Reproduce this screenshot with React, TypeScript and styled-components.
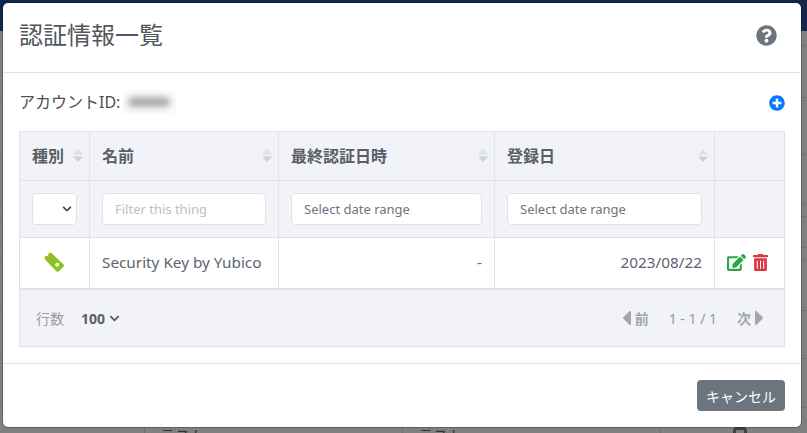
import * as React from 'react';
import styled, { createGlobalStyle } from 'styled-components';
import {
  FaQuestionCircle,
  FaPlusCircle,
  FaEdit,
  FaTrashAlt,
  FaCaretLeft,
  FaCaretRight,
  FaChevronDown,
} from 'react-icons/fa';

const GlobalStyle = createGlobalStyle`
  html, body {
    margin: 0;
    padding: 0;
    width: 807px;
    height: 433px;
    overflow: hidden;
    background: #808080;
    font-family: "Noto Sans", "Noto Sans CJK JP", sans-serif;
    color: #495057;
  }
  * { box-sizing: border-box; }
`;

const Page = styled.div`
  position: relative;
  width: 807px;
  height: 433px;
  display: flex;
  flex-direction: column;
  background: #808080;
  overflow: hidden;
`;

const NavBar = styled.div`
  height: 31px;
  flex: none;
  background: #14254d;
`;

const PageRow = styled.div<{ $height: number }>`
  height: ${({ $height }) => $height}px;
  flex: none;
  border-bottom: 1px solid #737373;
`;

const PageCells = styled.div`
  flex: 1;
  display: grid;
  grid-template-columns: 145px 258px 258px 1fr;
`;

const PageCell = styled.div`
  border-right: 1px solid #6f6f6f;
  padding: 17px 0 0 15px;
  font-size: 15px;
  line-height: 20px;
  color: #333;
  white-space: nowrap;

  &:last-child {
    border-right: none;
    padding-left: 72px;
  }
`;

const PageButton = styled.span`
  display: block;
  width: 14px;
  height: 14px;
  margin-top: 2px;
  border: 3px solid #3c4148;
  border-radius: 4px;
`;

const Dialog = styled.div`
  position: absolute;
  left: 3px;
  top: 3px;
  width: 798px;
  height: 424px;
  display: flex;
  flex-direction: column;
  background: #fff;
  border-radius: 5px;
  box-shadow: 0 0 0 1px rgba(0, 0, 0, 0.25);
`;

const DialogHeader = styled.header`
  height: 70px;
  flex: none;
  display: flex;
  align-items: center;
  justify-content: space-between;
  padding: 0 24px 5px 16px;
  border-bottom: 1px solid #dee2e6;
`;

const Title = styled.h1`
  margin: 0;
  font-size: 24px;
  font-weight: 400;
  line-height: 36px;
  color: #50565c;
`;

const HelpIcon = styled(FaQuestionCircle)`
  width: 21px;
  height: 21px;
  color: #6c757d;
`;

const DialogBody = styled.div`
  flex: 1;
  padding: 16px;
`;

const AccountRow = styled.div`
  height: 42px;
  display: flex;
  align-items: flex-start;
  justify-content: space-between;
`;

const AccountLabel = styled.div`
  display: flex;
  align-items: center;
  font-size: 16px;
  line-height: 26px;
  color: #495057;
`;

const BlurBox = styled.span`
  display: flex;
  align-items: center;
  justify-content: center;
  width: 54px;
  height: 24px;
  margin-left: 2px;
  overflow: hidden;
  background: #fbfbfb;
`;

const BlurredName = styled.span`
  display: block;
  width: 42px;
  height: 10px;
  border-radius: 5px;
  background: #a9a9ae;
  filter: blur(3px);
`;

const AddIcon = styled(FaPlusCircle)`
  width: 16px;
  height: 16px;
  margin-top: 6px;
  color: #007bff;
`;

const TableFrame = styled.table`
  width: 765px;
  table-layout: fixed;
  border-collapse: collapse;
  border: 1px solid #dee2ea;
`;

const HeadCell = styled.th`
  height: 49px;
  padding: 0 6px 2px 12px;
  background: #f1f3f8;
  border: 1px solid #dee2ea;
  text-align: left;
  font-size: 16px;
  font-weight: 700;
  color: #5a5f66;
`;

const HeadInner = styled.div`
  display: flex;
  align-items: center;
  justify-content: space-between;
`;

const FilterCell = styled.td`
  height: 57px;
  padding: 0 12px;
  background: #f1f3f8;
  border: 1px solid #dee2ea;
`;

const DataCell = styled.td<{ $align?: string }>`
  height: 51px;
  padding: 0 12px 2px;
  background: #fff;
  border: 1px solid #dee2ea;
  border-bottom: 2px solid #dee2ea;
  font-size: 15.3px;
  color: #5c6370;
  text-align: ${({ $align }) => $align || 'left'};
`;

const FilterInput = styled.input<{ $muted?: boolean }>`
  display: block;
  width: 100%;
  height: 32px;
  padding: 0 12px;
  border: 1px solid #dee2e6;
  border-radius: 4px;
  background: #fff;
  font-family: inherit;
  font-size: 13px;
  color: #495057;
  outline: none;

  &::placeholder {
    color: ${({ $muted }) => ($muted ? '#bcc0c6' : '#6c757d')};
    opacity: 1;
  }
`;

const SelectBox = styled.div`
  width: 45px;
  height: 32px;
  display: flex;
  align-items: center;
  justify-content: flex-end;
  padding-right: 4px;
  background: #fff;
  border: 1px solid #dee2e6;
  border-radius: 4px;
  color: #444;
`;

const ActionGroup = styled.div`
  display: flex;
  align-items: center;
  gap: 7px;
  margin-top: 2px;
`;

const EditIcon = styled(FaEdit)`
  width: 19px;
  height: 17px;
  color: #28a745;
`;

const TrashIcon = styled(FaTrashAlt)`
  width: 15px;
  height: 17px;
  color: #dc3545;
`;

const KeyCell = styled.div`
  display: flex;
  justify-content: center;
  margin-top: 2px;
`;

const Footer = styled.td`
  height: 58px;
  padding: 1px 16px 0;
  background: #f1f3f8;
  border: 1px solid #dee2ea;
`;

const FooterInner = styled.div`
  display: flex;
  align-items: center;
  justify-content: space-between;
`;

const RowsGroup = styled.div`
  display: flex;
  align-items: center;
  font-size: 14px;
  color: #999ca3;
`;

const RowsValue = styled.strong`
  display: flex;
  align-items: center;
  gap: 4px;
  margin-left: 17px;
  color: #5a5f66;
  font-size: 14px;
`;

const Pager = styled.div`
  display: flex;
  align-items: center;
  height: 24px;
  padding-right: 4px;
  font-size: 14px;
  color: #a3a6ad;
`;

const PagerStep = styled.span`
  display: flex;
  align-items: center;
  gap: 4px;
  font-weight: 700;
`;

const PagerCount = styled.span`
  margin: 0 20px;
  color: #8f9ba0;
`;

const PagerLeft = styled(FaCaretLeft)`
  width: 9px;
  height: 24px;
`;

const PagerRight = styled(FaCaretRight)`
  width: 9px;
  height: 24px;
`;

const DialogFooter = styled.footer`
  height: 64px;
  flex: none;
  display: flex;
  align-items: center;
  justify-content: flex-end;
  padding: 0 16px;
  border-top: 1px solid #dee2e6;
`;

const CancelButton = styled.button`
  width: 88px;
  height: 31px;
  padding: 0;
  border: none;
  border-radius: 4px;
  background: #6c757d;
  color: #fff;
  font-family: inherit;
  font-size: 14px;
`;

const SortMark = () => (
  <svg width="10" height="13" viewBox="0 0 10 13" aria-hidden="true">
    <path d="M5 0l5 5.5H0z" fill="#dde0e7" />
    <path d="M5 13l5-5.5H0z" fill="#cdd1da" />
  </svg>
);

const KeyMark = () => (
  <svg width="21" height="21" viewBox="0 0 21 21" aria-hidden="true">
    <path
      d="M4.2 1.2L7.2 0.8L19.6 12.4C20.2 13 20.2 13.8 19.6 14.4L14.6 19.4C14 20 13.2 20 12.6 19.4L1 7.6L0.8 4.8L2 3.6L3 4.4L4.8 2.4Z"
      fill="#8cc31e"
    />
    <circle cx="13.2" cy="12.8" r="2" fill="#fff" />
  </svg>
);

const columns = [
  { title: '種別', width: 70 },
  { title: '名前', width: 189 },
  { title: '最終認証日時', width: 216 },
  { title: '登録日', width: 220 },
  { title: '', width: 70 },
];

// rows of the page behind the dialog, only their edges show at the sides
const pageRows = [15, 52, 57, 49, 13, 31, 13, 50, 48, 49];

export default function App() {
  return (
    <Page>
      <GlobalStyle />
      <NavBar />
      {pageRows.map((h, i) => (
        <PageRow key={i} $height={h} />
      ))}
      <PageCells>
        <PageCell />
        <PageCell>テスト</PageCell>
        <PageCell>テスト</PageCell>
        <PageCell>
          <PageButton />
        </PageCell>
      </PageCells>
      <Dialog>
        <DialogHeader>
          <Title>認証情報一覧</Title>
          <HelpIcon />
        </DialogHeader>
        <DialogBody>
          <AccountRow>
            <AccountLabel>
              アカウントID:
              <BlurBox>
                <BlurredName />
              </BlurBox>
            </AccountLabel>
            <AddIcon />
          </AccountRow>
          <TableFrame>
            <colgroup>
              {columns.map((c, i) => (
                <col key={i} style={{ width: c.width }} />
              ))}
            </colgroup>
            <thead>
              <tr>
                {columns.map((c, i) => (
                  <HeadCell key={i}>
                    {c.title && (
                      <HeadInner>
                        {c.title}
                        <SortMark />
                      </HeadInner>
                    )}
                  </HeadCell>
                ))}
              </tr>
              <tr>
                <FilterCell>
                  <SelectBox>
                    <FaChevronDown size={10} />
                  </SelectBox>
                </FilterCell>
                <FilterCell>
                  <FilterInput $muted placeholder="Filter this thing" />
                </FilterCell>
                <FilterCell>
                  <FilterInput placeholder="Select date range" />
                </FilterCell>
                <FilterCell>
                  <FilterInput placeholder="Select date range" />
                </FilterCell>
                <FilterCell />
              </tr>
            </thead>
            <tbody>
              <tr>
                <DataCell>
                  <KeyCell>
                    <KeyMark />
                  </KeyCell>
                </DataCell>
                <DataCell>Security Key by Yubico</DataCell>
                <DataCell $align="right">-</DataCell>
                <DataCell $align="right">2023/08/22</DataCell>
                <DataCell>
                  <ActionGroup>
                    <EditIcon />
                    <TrashIcon />
                  </ActionGroup>
                </DataCell>
              </tr>
            </tbody>
            <tfoot>
              <tr>
                <Footer colSpan={5}>
                  <FooterInner>
                    <RowsGroup>
                      行数
                      <RowsValue>
                        100 <FaChevronDown size={11} />
                      </RowsValue>
                    </RowsGroup>
                    <Pager>
                      <PagerStep>
                        <PagerLeft />前
                      </PagerStep>
                      <PagerCount>1 - 1 / 1</PagerCount>
                      <PagerStep>
                        次<PagerRight />
                      </PagerStep>
                    </Pager>
                  </FooterInner>
                </Footer>
              </tr>
            </tfoot>
          </TableFrame>
        </DialogBody>
        <DialogFooter>
          <CancelButton>キャンセル</CancelButton>
        </DialogFooter>
      </Dialog>
    </Page>
  );
}
